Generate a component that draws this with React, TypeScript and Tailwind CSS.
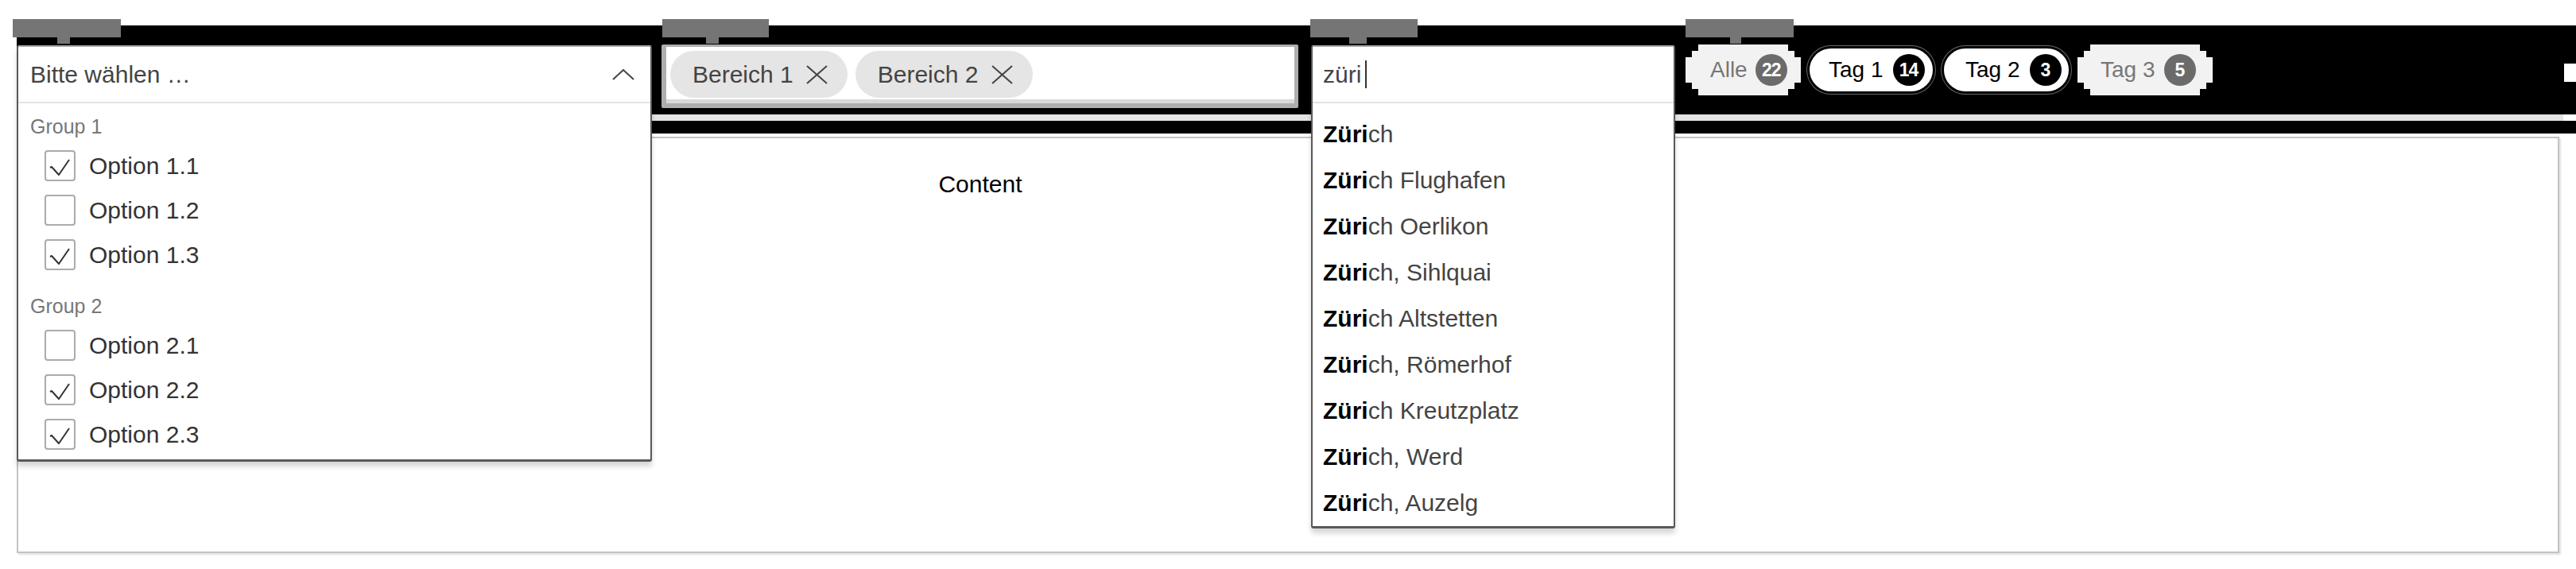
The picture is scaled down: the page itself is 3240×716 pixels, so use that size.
const groups = [
  {
    name: "Group 1",
    options: [
      { label: "Option 1.1", checked: true },
      { label: "Option 1.2", checked: false },
      { label: "Option 1.3", checked: true },
    ],
  },
  {
    name: "Group 2",
    options: [
      { label: "Option 2.1", checked: false },
      { label: "Option 2.2", checked: true },
      { label: "Option 2.3", checked: true },
    ],
  },
];

const places = [
  "ch",
  "ch Flughafen",
  "ch Oerlikon",
  "ch, Sihlquai",
  "ch Altstetten",
  "ch, Römerhof",
  "ch Kreutzplatz",
  "ch, Werd",
  "ch, Auzelg",
];

// stepped corners, like the reference's pixelated pills
const stepped =
  "[clip-path:polygon(16px_0,calc(100%_-_16px)_0,calc(100%_-_16px)_8px,calc(100%_-_8px)_8px,calc(100%_-_8px)_16px,100%_16px,100%_calc(100%_-_16px),calc(100%_-_8px)_calc(100%_-_16px),calc(100%_-_8px)_calc(100%_-_8px),calc(100%_-_16px)_calc(100%_-_8px),calc(100%_-_16px)_100%,16px_100%,16px_calc(100%_-_8px),8px_calc(100%_-_8px),8px_calc(100%_-_16px),0_calc(100%_-_16px),0_16px,8px_16px,8px_8px,16px_8px)]";

function Label({ pos, tail }: { pos: string; tail: string }) {
  return (
    <div className={`absolute top-[-8px] z-20 h-[23px] bg-[#757575] ${pos}`}>
      <div className={`absolute top-[23px] h-[8px] bg-[#757575] ${tail}`} />
    </div>
  );
}

function Checkbox({ checked }: { checked: boolean }) {
  return (
    <span className="flex h-[39px] w-[39px] shrink-0 items-center justify-center rounded-[4px] border-2 border-[#ababab] bg-white">
      {checked && (
        <svg width="35" height="35" viewBox="0 0 35 35" fill="none">
          <path d="M5 20 L7 19 L16 29 L29 10" stroke="#333" strokeWidth="2" strokeLinejoin="round" />
        </svg>
      )}
    </span>
  );
}

function GroupSelect() {
  return (
    <div className="absolute left-0 right-0 top-[25px] z-10 rounded-[3px] border-2 border-b-[3px] border-[#595959] border-t-[#a9a9a9] bg-white shadow-[0_6px_6px_rgba(0,0,0,0.16)]">
      <div className="flex h-[71px] items-center justify-between border-b-2 border-[#e3e3e3] pl-[15px] pr-[20px] text-[30px] text-[#444]">
        <span>Bitte wählen …</span>
        <svg width="28" height="14" viewBox="0 0 28 14" fill="none">
          <polyline points="1,13 14,1 27,13" stroke="#444" strokeWidth="2" />
        </svg>
      </div>
      <div className="pb-[4px] pt-[10px]">
        {groups.map((g, i) => (
          <div key={g.name} className={i > 0 ? "mt-[18px]" : ""}>
            <div className="flex h-[40px] items-center pl-[15px] text-[25px] text-[#777]">{g.name}</div>
            {g.options.map((o) => (
              <div key={o.label} className="flex h-[56px] items-center gap-[17px] pl-[33px] text-[30px] text-[#333]">
                <Checkbox checked={o.checked} />
                <span>{o.label}</span>
              </div>
            ))}
          </div>
        ))}
      </div>
    </div>
  );
}

function Chip({ text }: { text: string }) {
  return (
    <div className="flex h-[59px] items-center gap-[16px] rounded-full bg-[#e5e5e5] pl-[28px] pr-[25px] text-[30px] text-[#444]">
      <span>{text}</span>
      <svg width="27" height="24" viewBox="0 0 27 24" fill="none">
        <path d="M1 1 L26 23 M26 1 L1 23" stroke="#444" strokeWidth="2" />
      </svg>
    </div>
  );
}

function TagInput() {
  return (
    <div className="rounded-[2px] bg-[#aeaeae] pb-[6px] pl-[6px] pr-[5px] pt-[3px]">
      <div className="flex h-[66px] items-end gap-[10px] bg-white pb-[2px] pl-[5px]">
        <Chip text="Bereich 1" />
        <Chip text="Bereich 2" />
      </div>
      <div className="h-[5px] bg-[#d9d9d9]" />
    </div>
  );
}

function Autocomplete() {
  return (
    <div className="absolute left-0 right-0 top-[25px] z-10 rounded-[3px] border-2 border-b-[3px] border-[#595959] border-t-[#a9a9a9] bg-white shadow-[0_6px_6px_rgba(0,0,0,0.16)]">
      <div className="flex h-[71px] items-center border-b-2 border-[#e3e3e3] pl-[13px] text-[30px] text-[#444]">
        <span>züri</span>
        <span className="ml-[5px] h-[35px] w-[2px] bg-[#333]" />
      </div>
      <div className="pb-[1px] pt-[9px]">
        {places.map((p) => (
          <div key={p} className="flex h-[58px] items-center pl-[13px] text-[30px] text-[#444]">
            <span className="font-bold text-black">Züri</span>
            <span className="whitespace-pre">{p}</span>
          </div>
        ))}
      </div>
    </div>
  );
}

function Badge({ n, dark }: { n: number; dark: boolean }) {
  return (
    <span
      className={`flex h-[40px] w-[40px] shrink-0 items-center justify-center rounded-full text-[23px] font-bold tracking-[-1px] text-white ${
        dark ? "bg-black" : "bg-[#6b6b6b]"
      }`}
    >
      {n}
    </span>
  );
}

function TagFilter() {
  return (
    <div className="mt-[24px] flex items-center gap-[8px] text-[28px]">
      <div className={`flex h-[64px] w-[145px] items-center gap-[10px] bg-[#f2f2f2] pl-[31px] text-[#777] ${stepped}`}>
        <span>Alle</span>
        <Badge n={22} dark={false} />
      </div>
      <div className="flex h-[60px] w-[161px] items-center gap-[12px] rounded-full border-[3px] border-black bg-white pl-[24px] text-black ring-1 ring-[#6a6a6a]">
        <span>Tag 1</span>
        <Badge n={14} dark />
      </div>
      <div className="flex h-[60px] w-[163px] items-center gap-[12px] rounded-full border-[3px] border-black bg-white pl-[27px] text-black ring-1 ring-[#6a6a6a]">
        <span>Tag 2</span>
        <Badge n={3} dark />
      </div>
      <div className={`flex h-[64px] w-[170px] items-center gap-[11px] bg-[#f2f2f2] pl-[29px] text-[#777] ${stepped}`}>
        <span>Tag 3</span>
        <Badge n={5} dark={false} />
      </div>
    </div>
  );
}

export default function App() {
  return (
    <div className="relative h-[716px] w-[3240px] overflow-hidden bg-white font-['Liberation_Sans',Arial,sans-serif]">
      <div className="ml-[21px] pt-[32px]">
        {/* toolbar */}
        <div className="flex h-[112px] items-start bg-black">
          <div className="relative h-full w-[799px] shrink-0">
            <Label pos="left-[-5px] w-[136px]" tail="left-[56px] w-[16px]" />
            <GroupSelect />
          </div>
          <div className="relative ml-[12px] h-full w-[801px] shrink-0">
            <Label pos="left-[1px] w-[134px]" tail="left-[55px] w-[16px]" />
            <div className="mt-[24px]">
              <TagInput />
            </div>
          </div>
          <div className="relative ml-[16px] h-full w-[458px] shrink-0">
            <Label pos="left-[-1px] w-[135px]" tail="left-[49px] w-[22px]" />
            <Autocomplete />
          </div>
          <div className="relative ml-[13px] h-full shrink-0">
            <Label pos="left-0 w-[136px]" tail="left-[56px] w-[14px]" />
            <TagFilter />
          </div>
          <div className="ml-auto mt-[48px] h-[23px] w-[15px] bg-white" />
        </div>
        <div className="flex h-[8px]">
          <div className="flex-1 bg-[#e4e4e4]" />
          <div className="w-[16px] bg-white" />
        </div>
        <div className="h-[16px] bg-black" />

        {/* content */}
        <div className="mr-[21px] mt-[4px] h-[524px] border-2 border-[#c3c3c3] shadow-[2px_2px_2px_rgba(0,0,0,0.12)]">
          <div className="w-[2420px] pt-[41px] text-center text-[30px] leading-[34px] text-black">Content</div>
        </div>
      </div>
    </div>
  );
}
